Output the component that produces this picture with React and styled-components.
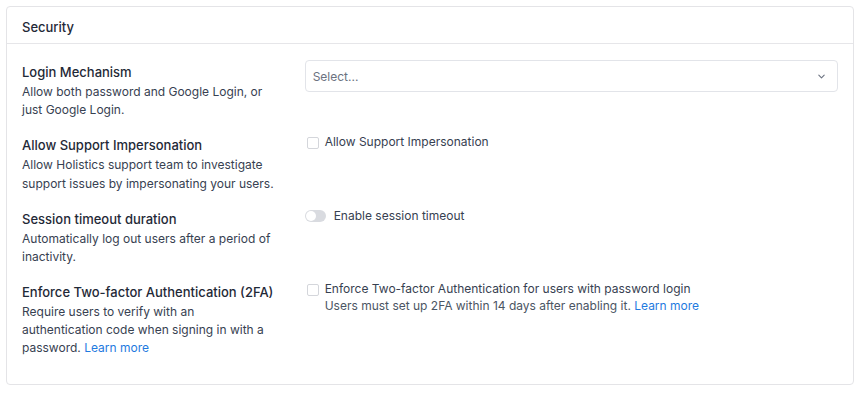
import React from "react";
import styled, { createGlobalStyle } from "styled-components";

const Global = createGlobalStyle`
  html, body { margin: 0; padding: 0; background: #ffffff; }
  body { font-family: Inter, "Noto Sans", "Liberation Sans", sans-serif; color: #1f2937; }
  * { box-sizing: border-box; }
`;

const Page = styled.div`
  padding: 6px 7px 6px 6px;
`;

const Card = styled.section`
  border: 1px solid #e4e4e7;
  border-radius: 4px;
  background: #fff;
`;

const CardHeader = styled.header`
  height: 37px;
  display: flex;
  align-items: center;
  padding: 3px 15px 0;
  border-bottom: 1px solid #e6e6e9;
  font-size: 13px;
  font-weight: 500;
  color: #1f2937;
`;

const Body = styled.div`
  display: grid;
  grid-template-columns: 1fr 2fr;
  column-gap: 16px;
  row-gap: 14.7px;
  padding: 17px 15px 26px;
`;

const Info = styled.div`
  display: flex;
  flex-direction: column;
  padding-right: 12px;
`;

const Title = styled.div`
  font-size: 13px;
  font-weight: 500;
  line-height: 22px;
  color: #1f2937;
`;

const Desc = styled.div`
  font-size: 12px;
  line-height: 18.3px;
  color: #374151;
`;

const Link = styled.a`
  color: #1f7ae0;
  text-decoration: none;
  cursor: pointer;
`;

const Control = styled.div`
  display: flex;
  flex-direction: column;
`;

const SelectBox = styled.div`
  height: 32px;
  margin-top: -1px;
  border: 1px solid #e2e4e9;
  border-radius: 4px;
  display: flex;
  align-items: center;
  justify-content: space-between;
  padding: 0 11px 0 7px;
  font-size: 12px;
  color: #6b7280;
`;

const Option = styled.label`
  display: flex;
  align-items: flex-start;
  gap: ${(p) => p.$gap || 6}px;
  font-size: 12px;
  line-height: 16px;
  color: #374151;
  padding-left: ${(p) => p.$indent || 0}px;
`;

const Box = styled.span`
  flex: none;
  width: 12px;
  height: 12px;
  margin-top: 3px;
  border: 1px solid #d4d6db;
  border-radius: 2px;
  background: #fff;
`;

const Switch = styled.span`
  flex: none;
  position: relative;
  width: 21px;
  height: 12px;
  margin-top: 2px;
  border-radius: 6px;
  background: #d9dbe0;
  &::after {
    content: "";
    position: absolute;
    left: 1px;
    top: 1px;
    width: 10px;
    height: 10px;
    border-radius: 50%;
    background: #fff;
  }
`;

const OptionText = styled.div`
  display: flex;
  flex-direction: column;
`;

const Hint = styled.div`
  font-size: 12px;
  line-height: 18px;
  color: #4b5563;
`;

const Chevron = () => (
  <svg width="9" height="9" viewBox="0 0 10 10" fill="none">
    <path d="M2 3.5L5 6.5L8 3.5" stroke="#6b7280" strokeWidth="1.2" strokeLinecap="round" strokeLinejoin="round" />
  </svg>
);

export default function App() {
  return (
    <>
      <Global />
      <Page>
        <Card>
          <CardHeader>Security</CardHeader>
          <Body>
            <Info>
              <Title>Login Mechanism</Title>
              <Desc>Allow both password and Google Login, or just Google Login.</Desc>
            </Info>
            <Control>
              <SelectBox>
                <span>Select...</span>
                <Chevron />
              </SelectBox>
            </Control>

            <Info>
              <Title>Allow Support Impersonation</Title>
              <Desc>Allow Holistics support team to investigate support issues by impersonating your users.</Desc>
            </Info>
            <Control>
              <Option $indent={2}>
                <Box />
                <span>Allow Support Impersonation</span>
              </Option>
            </Control>

            <Info>
              <Title>Session timeout duration</Title>
              <Desc>Automatically log out users after a period of inactivity.</Desc>
            </Info>
            <Control>
              <Option $gap={8}>
                <Switch />
                <span>Enable session timeout</span>
              </Option>
            </Control>

            <Info>
              <Title>Enforce Two-factor Authentication (2FA)</Title>
              <Desc>
                Require users to verify with an authentication code when signing in with a password.{" "}
                <Link>Learn more</Link>
              </Desc>
            </Info>
            <Control>
              <Option $indent={2}>
                <Box />
                <OptionText>
                  <span>Enforce Two-factor Authentication for users with password login</span>
                  <Hint>
                    Users must set up 2FA within 14 days after enabling it. <Link>Learn more</Link>
                  </Hint>
                </OptionText>
              </Option>
            </Control>
          </Body>
        </Card>
      </Page>
    </>
  );
}
